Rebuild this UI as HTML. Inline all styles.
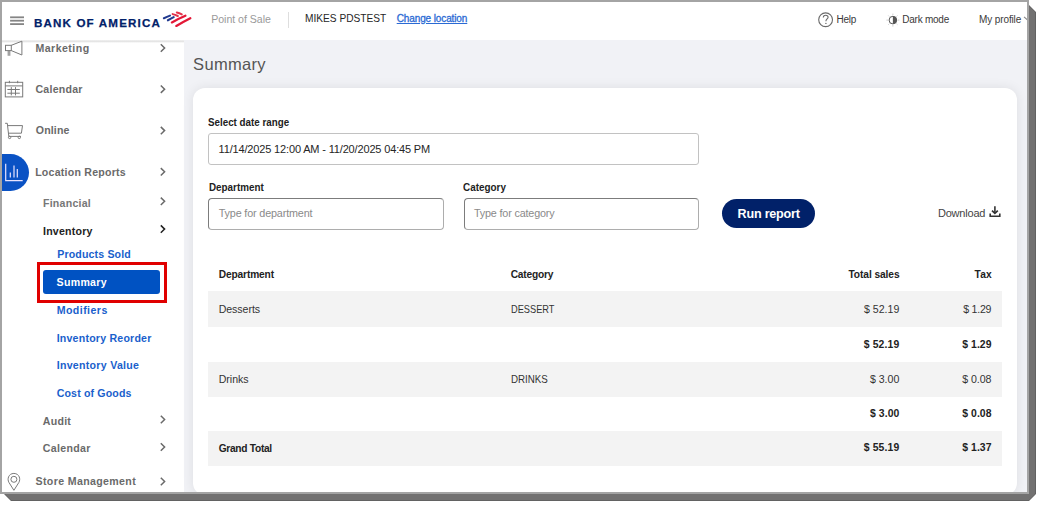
<!DOCTYPE html>
<html><head><meta charset="utf-8">
<style>
*{margin:0;padding:0;box-sizing:border-box}
html,body{width:1041px;height:506px;overflow:hidden;background:#fff;font-family:"Liberation Sans",sans-serif}
.t{position:absolute;white-space:nowrap;line-height:1}
#clip{position:absolute;left:0;top:0;width:1027px;height:492px;overflow:hidden;background:#fff}
#main{position:absolute;left:184px;top:40px;width:843px;height:452px;background:#f1f2f6}
#side{position:absolute;left:0;top:40px;width:184px;height:452px;background:#fff}
#hdr{position:absolute;left:0;top:0;width:1027px;height:40px;background:#fff}
#hshadow{position:absolute;left:0;top:39.5px;width:184px;height:3px;background:linear-gradient(rgba(0,0,0,0.06),rgba(0,0,0,0.10) 50%,rgba(0,0,0,0))}
#hshadow2{position:absolute;left:184px;top:40px;width:843px;height:1.5px;background:rgba(0,0,0,0.025)}
#card{position:absolute;left:193px;top:88px;width:824px;height:406.5px;background:#fff;border-radius:12px;box-shadow:0 0 12px rgba(0,0,0,0.085)}
.inp{position:absolute;border:1px solid #9c9c9c;border-radius:3px;background:#fff}
.row{position:absolute;left:208px;width:793.5px;height:35px;background:#f3f3f3}
.bd{position:absolute;background:#a4a4a4}
svg{position:absolute;left:0;top:0;overflow:visible}
</style></head><body>
<div id="clip">
  <div id="main"></div>
  <div id="side"></div>
  <div id="card"></div>
  <div id="hdr"></div>
  <div id="hshadow"></div>

  <!-- header separator -->
  <div style="position:absolute;left:288px;top:11.5px;width:1px;height:16.5px;background:#dedede"></div>

  <!-- sidebar active circle -->
  <div style="position:absolute;left:-6px;top:153.7px;width:35.4px;height:37px;border-radius:0 18.5px 18.5px 0;background:#0a52c4"></div>
  <!-- red box and active button -->
  <div style="position:absolute;left:37px;top:262px;width:130.2px;height:40.5px;border:3px solid #e00000"></div>
  <div style="position:absolute;left:43.2px;top:270.4px;width:117px;height:23.7px;border-radius:3px;background:#0052c2"></div>

  <!-- inputs -->
  <div class="inp" style="left:208px;top:133px;width:491.2px;height:31.5px;border-color:#c2c2c2;border-radius:3px"></div>
  <div class="inp" style="left:208px;top:198px;width:235.6px;height:31.5px;border-color:#7c7c7c #adadad #adadad #7c7c7c;border-radius:4px"></div>
  <div class="inp" style="left:464px;top:198px;width:235.2px;height:31.5px;border-color:#7c7c7c #adadad #adadad #7c7c7c;border-radius:4px"></div>
  <!-- run report -->
  <div style="position:absolute;left:721.9px;top:199.1px;width:93.5px;height:28.5px;border-radius:14.5px;background:#012169"></div>

  <!-- table rows -->
  <div class="row" style="top:291.2px;height:36px"></div>
  <div class="row" style="top:361.5px;height:35.5px"></div>
  <div class="row" style="top:430.8px;height:35.2px"></div>

  <svg width="1027" height="492">
    <!-- hamburger -->
    <g stroke="#858585" stroke-width="1.8">
      <line x1="10.1" y1="17.3" x2="24" y2="17.3"/>
      <line x1="10.1" y1="20.7" x2="24" y2="20.7"/>
      <line x1="10.1" y1="24.1" x2="24" y2="24.1"/>
    </g>
    <!-- BofA flag -->
    <g stroke-linecap="round" fill="none">
      <path d="M163.9,18.2 Q167,16.8 170,15.6" stroke="#213a8f" stroke-width="2.1"/>
      <path d="M167.9,20.3 Q170.9,18.8 173.7,17.2" stroke="#213a8f" stroke-width="2.1"/>
      <path d="M172.6,14.1 Q175.3,14.8 177.8,16" stroke="#e3324a" stroke-width="2"/>
      <path d="M176.8,12.5 Q179.4,13.2 181.8,14.4" stroke="#e3324a" stroke-width="2"/>
      <path d="M171.9,22.4 Q178.8,18.6 185.4,15.8" stroke="#e31837" stroke-width="2.3"/>
      <path d="M176.3,25.9 Q183.4,21.7 190.3,18.2" stroke="#e31837" stroke-width="2.3"/>
    </g>
    <!-- help icon -->
    <circle cx="825.6" cy="19.75" r="6.9" fill="none" stroke="#6a6a6a" stroke-width="1.1"/>
    <path d="M823.3,17.6 C823.3,15.9 824.4,15.2 825.7,15.2 C827.1,15.2 828.1,16.1 828.1,17.3 C828.1,18.9 825.9,19.1 825.9,21.2" fill="none" stroke="#6a6a6a" stroke-width="1.1"/>
    <circle cx="825.9" cy="23.4" r="0.7" fill="#6a6a6a"/>
    <!-- dark mode icon -->
    <g stroke="#c8c8c8" stroke-width="0.9">
      <line x1="892.9" y1="13.6" x2="892.9" y2="15.2"/>
      <line x1="892.9" y1="25" x2="892.9" y2="26.6"/>
      <line x1="886.4" y1="20.1" x2="888" y2="20.1"/>
      <line x1="897.8" y1="20.1" x2="899.4" y2="20.1"/>
      <line x1="888.3" y1="15.5" x2="889.4" y2="16.6"/>
      <line x1="896.4" y1="23.6" x2="897.5" y2="24.7"/>
      <line x1="888.3" y1="24.7" x2="889.4" y2="23.6"/>
      <line x1="896.4" y1="16.6" x2="897.5" y2="15.5"/>
    </g>
    <circle cx="892.9" cy="20.1" r="3.8" fill="#fff" stroke="#555" stroke-width="1"/>
    <path d="M892.9,16.3 A3.8,3.8 0 0 1 892.9,23.9 Z" fill="#555"/>
    <!-- my profile chevron (cut) -->
    <path d="M1024,16.8 L1027,19.6 L1030,16.8" fill="none" stroke="#888" stroke-width="1.1"/>

    <!-- megaphone -->
    <g fill="none" stroke="#7a7a7a" stroke-width="1">
      <rect x="5.5" y="45.3" width="5.8" height="5.3"/>
      <path d="M11.3,45.3 L21.9,41.2 L21.9,55 L11.3,50.6"/>
      <path d="M8.2,50.6 L8.2,55.8 M9.8,50.6 L9.8,55.8"/>
    </g>
    <!-- calendar -->
    <g fill="none" stroke="#7a7a7a" stroke-width="1">
      <rect x="5.3" y="82.3" width="17.4" height="14.6"/>
      <line x1="5.3" y1="85.9" x2="22.7" y2="85.9"/>
      <line x1="9.4" y1="80.8" x2="9.4" y2="83.2"/>
      <line x1="17.7" y1="80.8" x2="17.7" y2="83.2"/>
      <line x1="7.4" y1="89.5" x2="19.8" y2="89.5"/>
      <line x1="7.4" y1="93.2" x2="19.8" y2="93.2"/>
      <line x1="11.3" y1="87.1" x2="11.3" y2="95.4"/>
      <line x1="15.5" y1="87.1" x2="15.5" y2="95.4"/>
    </g>
    <!-- cart -->
    <g fill="none" stroke="#7a7a7a" stroke-width="1">
      <path d="M5.1,123.3 L7.3,123.3 L8.8,136.4 L21,136.4"/>
      <path d="M7.9,125.6 L22.5,125.6 L21.4,133.2 L8.6,133.2"/>
      <circle cx="9.6" cy="137.4" r="1.2"/>
      <circle cx="19.3" cy="137.4" r="1.2"/>
    </g>
    <!-- chart icon -->
    <g stroke="#e8e4ff" stroke-width="1.2" fill="none">
      <path d="M5.7,163.7 L5.7,180.6 L22.7,180.6"/>
      <line x1="10.3" y1="172.5" x2="10.3" y2="177.6"/>
      <line x1="14" y1="165.5" x2="14" y2="177.6"/>
      <line x1="17.3" y1="169" x2="17.3" y2="177.6"/>
    </g>
    <!-- pin -->
    <g fill="none" stroke="#7a7a7a" stroke-width="1">
      <path d="M13.9,490.3 L8.9,482.4 C7.1,479.3 8.2,473.6 13.9,473.4 C19.6,473.6 20.7,479.3 18.9,482.4 Z"/>
      <circle cx="13.9" cy="479.3" r="3"/>
    </g>
    <!-- sidebar chevrons -->
    <g fill="none" stroke-width="1.5">
      <path d="M160.8,44.3 L164.6,48 L160.8,51.7" stroke="#6a6a6a"/>
      <path d="M160.8,85.5 L164.6,89.2 L160.8,92.9" stroke="#6a6a6a"/>
      <path d="M160.8,126.9 L164.6,130.6 L160.8,134.3" stroke="#6a6a6a"/>
      <path d="M160.8,168.1 L164.6,171.8 L160.8,175.5" stroke="#6a6a6a"/>
      <path d="M160.8,197.6 L164.6,201.3 L160.8,205" stroke="#6a6a6a"/>
      <path d="M160.8,225.4 L164.6,229.1 L160.8,232.8" stroke="#222"/>
      <path d="M160.8,415.8 L164.6,419.5 L160.8,423.2" stroke="#6a6a6a"/>
      <path d="M160.8,443.3 L164.6,447 L160.8,450.7" stroke="#6a6a6a"/>
      <path d="M160.8,477.8 L164.6,481.5 L160.8,485.2" stroke="#6a6a6a"/>
    </g>
    <!-- download icon -->
    <g fill="none" stroke="#333" stroke-width="1.6">
      <line x1="994.9" y1="206.2" x2="994.9" y2="213"/>
      <path d="M992,210.6 L994.9,213.4 L997.8,210.6"/>
      <path d="M990.2,213.6 L990.2,216.2 L999.8,216.2 L999.8,213.6"/>
    </g>
  </svg>
<div class="t" style="left:33.90px;top:16.64px;font-size:11.6px;font-weight:700;color:#012169;letter-spacing:1.166px;-webkit-text-stroke:0.25px #012169;">BANK OF AMERICA</div>
<div class="t" style="left:211.16px;top:14.19px;font-size:10.6px;font-weight:400;color:#9a9a9a;letter-spacing:-0.027px;">Point of Sale</div>
<div class="t" style="left:304.59px;transform-origin:0 0;transform:scaleX(0.9237);top:13.25px;font-size:11.0px;font-weight:400;color:#262626;letter-spacing:0.000px;">MIKES PDSTEST</div>
<div class="t" style="left:396.70px;top:13.70px;font-size:10.0px;font-weight:400;color:#2a6ad4;letter-spacing:-0.113px;text-decoration:underline;-webkit-text-stroke:0.3px #2a6ad4;">Change location</div>
<div class="t" style="left:836.40px;top:14.50px;font-size:10.0px;font-weight:400;color:#3a3a3a;letter-spacing:-0.226px;">Help</div>
<div class="t" style="left:902.30px;top:14.50px;font-size:10.0px;font-weight:400;color:#3a3a3a;letter-spacing:-0.251px;">Dark mode</div>
<div class="t" style="left:979.10px;top:14.50px;font-size:10.0px;font-weight:400;color:#3a3a3a;letter-spacing:-0.129px;">My profile</div>
<div class="t" style="left:35.46px;top:43.09px;font-size:10.6px;font-weight:700;color:#6a6a6a;letter-spacing:0.451px;">Marketing</div>
<div class="t" style="left:35.46px;top:84.09px;font-size:10.6px;font-weight:700;color:#6a6a6a;letter-spacing:0.230px;">Calendar</div>
<div class="t" style="left:35.76px;top:124.89px;font-size:10.6px;font-weight:700;color:#6a6a6a;letter-spacing:0.137px;">Online</div>
<div class="t" style="left:35.16px;top:166.79px;font-size:10.6px;font-weight:700;color:#6a6a6a;letter-spacing:0.230px;">Location Reports</div>
<div class="t" style="left:42.96px;top:198.19px;font-size:10.6px;font-weight:700;color:#777777;letter-spacing:0.242px;">Financial</div>
<div class="t" style="left:42.96px;top:225.69px;font-size:10.6px;font-weight:700;color:#222222;letter-spacing:0.233px;">Inventory</div>
<div class="t" style="left:57.26px;top:249.29px;font-size:10.6px;font-weight:700;color:#1a5fcc;letter-spacing:0.145px;">Products Sold</div>
<div class="t" style="left:56.56px;top:277.29px;font-size:10.6px;font-weight:700;color:#ffffff;letter-spacing:0.293px;">Summary</div>
<div class="t" style="left:56.66px;top:304.89px;font-size:10.6px;font-weight:700;color:#1a5fcc;letter-spacing:0.445px;">Modifiers</div>
<div class="t" style="left:56.66px;top:332.59px;font-size:10.6px;font-weight:700;color:#1a5fcc;letter-spacing:0.213px;">Inventory Reorder</div>
<div class="t" style="left:56.66px;top:359.89px;font-size:10.6px;font-weight:700;color:#1a5fcc;letter-spacing:0.289px;">Inventory Value</div>
<div class="t" style="left:56.66px;top:387.59px;font-size:10.6px;font-weight:700;color:#1a5fcc;letter-spacing:0.156px;">Cost of Goods</div>
<div class="t" style="left:42.86px;top:415.59px;font-size:10.6px;font-weight:700;color:#6a6a6a;letter-spacing:0.244px;">Audit</div>
<div class="t" style="left:42.86px;top:442.69px;font-size:10.6px;font-weight:700;color:#6a6a6a;letter-spacing:0.301px;">Calendar</div>
<div class="t" style="left:35.56px;top:476.49px;font-size:10.6px;font-weight:700;color:#6a6a6a;letter-spacing:0.358px;">Store Management</div>
<div class="t" style="left:193.11px;top:56.18px;font-size:16.5px;font-weight:400;color:#555555;letter-spacing:0.315px;">Summary</div>
<div class="t" style="left:208.21px;transform-origin:0 0;transform:scaleX(0.9067);top:116.62px;font-size:10.8px;font-weight:700;color:#222222;letter-spacing:0.000px;">Select date range</div>
<div class="t" style="left:218.54px;top:143.95px;font-size:11.0px;font-weight:400;color:#262626;letter-spacing:-0.156px;">11/14/2025 12:00 AM - 11/20/2025 04:45 PM</div>
<div class="t" style="left:208.61px;transform-origin:0 0;transform:scaleX(0.9289);top:181.69px;font-size:10.6px;font-weight:700;color:#222222;letter-spacing:0.000px;">Department</div>
<div class="t" style="left:463.31px;transform-origin:0 0;transform:scaleX(0.9340);top:181.69px;font-size:10.6px;font-weight:700;color:#222222;letter-spacing:0.000px;">Category</div>
<div class="t" style="left:218.75px;top:208.32px;font-size:10.8px;font-weight:400;color:#8a8a8a;letter-spacing:-0.159px;">Type for department</div>
<div class="t" style="left:473.95px;top:208.32px;font-size:10.8px;font-weight:400;color:#8a8a8a;letter-spacing:-0.166px;">Type for category</div>
<div class="t" style="left:737.54px;top:208.09px;font-size:12.6px;font-weight:700;color:#ffffff;letter-spacing:-0.216px;">Run report</div>
<div class="t" style="left:937.94px;top:207.95px;font-size:11.0px;font-weight:400;color:#444444;letter-spacing:-0.205px;">Download</div>
<div class="t" style="left:218.69px;top:269.63px;font-size:10.2px;font-weight:700;color:#222222;letter-spacing:-0.132px;">Department</div>
<div class="t" style="left:510.69px;top:269.63px;font-size:10.2px;font-weight:700;color:#222222;letter-spacing:-0.193px;">Category</div>
<div class="t" style="left:899.53px;transform:translateX(-100%);top:269.63px;font-size:10.2px;font-weight:700;color:#222222;letter-spacing:-0.079px;">Total sales</div>
<div class="t" style="left:992.06px;transform:translateX(-100%);top:269.63px;font-size:10.2px;font-weight:700;color:#222222;letter-spacing:0.253px;">Tax</div>
<div class="t" style="left:218.66px;top:303.59px;font-size:10.6px;font-weight:400;color:#333333;letter-spacing:-0.049px;">Desserts</div>
<div class="t" style="left:510.74px;transform-origin:0 0;transform:scaleX(0.8731);top:303.59px;font-size:10.6px;font-weight:400;color:#333333;letter-spacing:0.000px;">DESSERT</div>
<div class="t" style="left:899.31px;transform:translateX(-100%);top:303.59px;font-size:10.6px;font-weight:400;color:#333333;letter-spacing:-0.018px;">$ 52.19</div>
<div class="t" style="left:991.30px;transform:translateX(-100%);top:303.59px;font-size:10.6px;font-weight:400;color:#333333;letter-spacing:-0.223px;">$ 1.29</div>
<div class="t" style="left:899.48px;transform:translateX(-100%);top:339.96px;font-size:10.4px;font-weight:700;color:#222222;letter-spacing:0.161px;">$ 52.19</div>
<div class="t" style="left:991.59px;transform:translateX(-100%);top:339.96px;font-size:10.4px;font-weight:700;color:#222222;letter-spacing:0.069px;">$ 1.29</div>
<div class="t" style="left:218.66px;top:373.99px;font-size:10.6px;font-weight:400;color:#333333;letter-spacing:-0.015px;">Drinks</div>
<div class="t" style="left:510.71px;transform-origin:0 0;transform:scaleX(0.9213);top:373.99px;font-size:10.6px;font-weight:400;color:#333333;letter-spacing:0.000px;">DRINKS</div>
<div class="t" style="left:899.32px;transform:translateX(-100%);top:373.99px;font-size:10.6px;font-weight:400;color:#333333;letter-spacing:-0.003px;">$ 3.00</div>
<div class="t" style="left:991.50px;transform:translateX(-100%);top:373.99px;font-size:10.6px;font-weight:400;color:#333333;letter-spacing:-0.023px;">$ 0.08</div>
<div class="t" style="left:899.43px;transform:translateX(-100%);top:408.76px;font-size:10.4px;font-weight:700;color:#222222;letter-spacing:0.109px;">$ 3.00</div>
<div class="t" style="left:991.61px;transform:translateX(-100%);top:408.76px;font-size:10.4px;font-weight:700;color:#222222;letter-spacing:0.089px;">$ 0.08</div>
<div class="t" style="left:218.69px;top:443.63px;font-size:10.2px;font-weight:700;color:#222222;letter-spacing:-0.290px;">Grand Total</div>
<div class="t" style="left:899.48px;transform:translateX(-100%);top:443.46px;font-size:10.4px;font-weight:700;color:#222222;letter-spacing:0.161px;">$ 55.19</div>
<div class="t" style="left:991.59px;transform:translateX(-100%);top:443.46px;font-size:10.4px;font-weight:700;color:#222222;letter-spacing:0.069px;">$ 1.37</div>
</div>
<!-- frame border -->
<div class="bd" style="left:0;top:0;width:1029px;height:2px"></div>
<div class="bd" style="left:0;top:0;width:2px;height:494px"></div>
<div class="bd" style="left:1027px;top:0;width:2px;height:494px"></div>
<div class="bd" style="left:0;top:492px;width:1029px;height:2px"></div>
<svg width="1041" height="506"><polygon points="1029,5 1036,12 1036,494 1029,501 11,501 4,494 1029,494" fill="#626262"/><polygon points="1029,6 1035,12 1035,494 1029,500 11,500 5,494 1029,494" fill="#727171"/></svg>
</body></html>
